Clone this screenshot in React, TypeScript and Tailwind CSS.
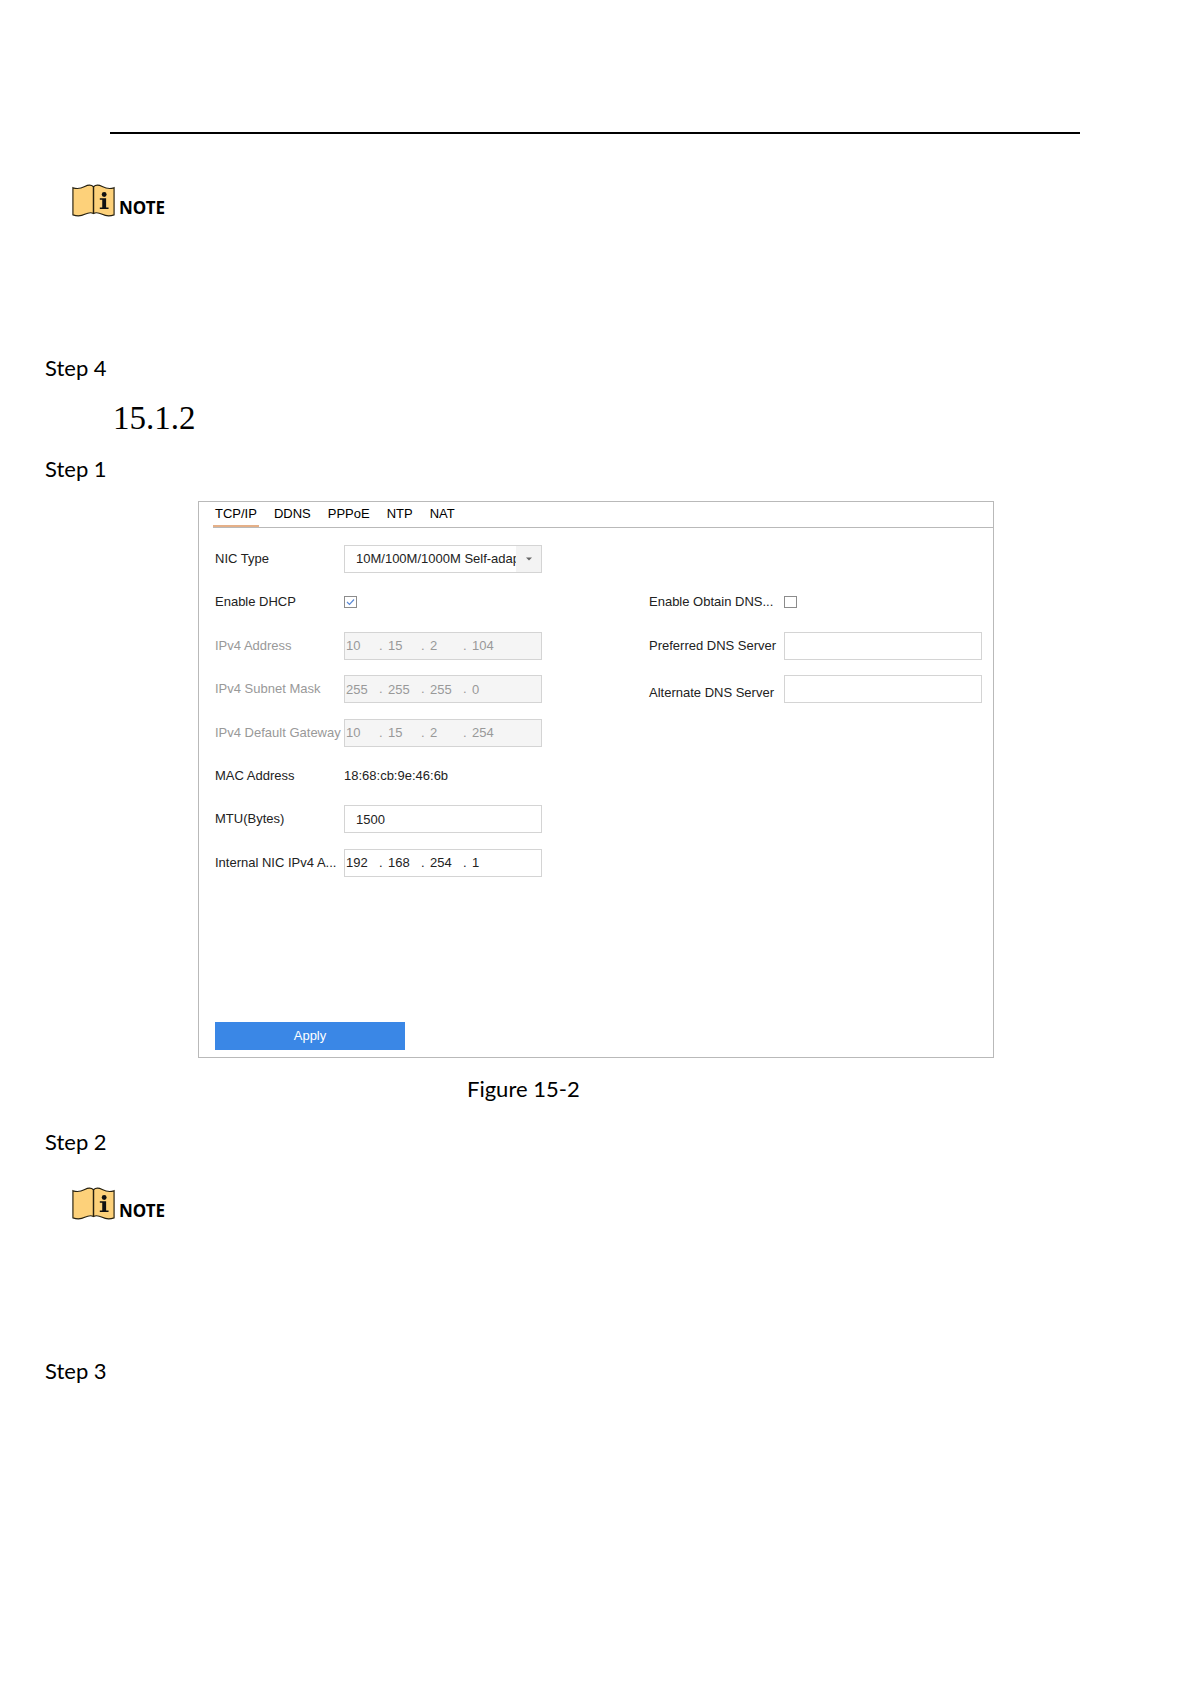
import React, { useId, useState } from "react";

function Note() {
  return (
    <div className="flex items-end gap-1 pl-[72px]">
      <svg width="43" height="33" viewBox="0 0 44 34" aria-hidden="true">
        <path
          d="M.8 3.8C6 5.8 9.500 4.400 13 2.600 16.500.8 19.500 .5 22 2.800 24.500 .5 27.500.8 31 2.600 34.500 4.400 38 5.800 43.200 3.800V31.800C38 33.600 34.500 33 31 31.200 27.500 29.500 24.500 28.800 22 30.500 19.500 28.800 16.500 29.500 13 31.200 9.500 33 6 33.600 .8 31.800Z"
          fill="#fdd17a"
          stroke="#26200f"
          strokeWidth="1.2"
        />
        <path d="M22 2.500V30.500" stroke="#26200f" strokeWidth="1.5" />
        <circle cx="33" cy="10.800" r="2.500" fill="#111" />
        <path d="M28.500 14.800H35V24.200H37.500V25.700H28.500V24.200H31V16.300H28.500Z" fill="#111" />
      </svg>
      <span className="font-['Noto_Sans'] text-[17px] leading-[18px] font-bold">NOTE</span>
    </div>
  );
}

function Step({ n }: { n: number }) {
  return <p className="pl-[45px] font-['Lato'] text-[22px] leading-7">Step {n}</p>;
}

const box = "h-7 w-full border border-[#d4d4d4]";

function Row({
  label,
  muted,
  low,
  wide,
  children,
}: {
  label: string;
  muted?: boolean;
  low?: boolean;
  wide?: boolean;
  children: (id: string) => React.ReactNode;
}) {
  const id = useId();
  return (
    <div className="flex h-7 items-center">
      <label
        htmlFor={id}
        className={
          (wide ? "w-[135px] " : "w-[129px] ") +
          (low ? "self-end " : "") +
          (muted ? "text-[#999]" : "text-[#222]") +
          " shrink-0 leading-5 whitespace-nowrap"
        }
      >
        {label}
      </label>
      <div className="flex w-[198px] items-center">{children(id)}</div>
    </div>
  );
}

function IpField({ id, label, value, disabled }: { id: string; label: string; value: string; disabled?: boolean }) {
  return (
    <div className={box + " flex items-center pl-px " + (disabled ? "bg-[#f5f5f5] text-[#999]" : "text-[#222]")}>
      {value.split(".").map((octet, i) => (
        <React.Fragment key={i}>
          {i > 0 && <span className="w-[9px]">.</span>}
          <input
            id={i === 0 ? id : undefined}
            aria-label={`${label}, part ${i + 1}`}
            className="h-5 w-[33px] bg-transparent"
            defaultValue={octet}
            disabled={disabled}
          />
        </React.Fragment>
      ))}
    </div>
  );
}

function Check({ id, initial }: { id: string; initial: boolean }) {
  const [on, setOn] = useState(initial);
  return (
    <span className="relative flex h-3 w-[13px]">
      <input
        id={id}
        type="checkbox"
        checked={on}
        onChange={() => setOn(!on)}
        className="h-3 w-[13px] appearance-none border border-[#8c8c8c]"
      />
      {on && (
        <svg className="pointer-events-none absolute inset-0" width="13" height="12" viewBox="0 0 13 12" aria-hidden="true">
          <path d="M3 6L5.500 8.500L10 3.500" fill="none" stroke="#5b8ad6" strokeWidth="1.200" />
        </svg>
      )}
    </span>
  );
}

const tabs = ["TCP/IP", "DDNS", "PPPoE", "NTP", "NAT"];

export default function App() {
  return (
    <main className="min-h-screen bg-white pt-[132px] pb-10 text-black">
      <hr className="mr-[111px] ml-[110px] border-0 border-t-2 border-black" />
      <div className="mt-[50px]">
        <Note />
      </div>
      <div className="mt-[137px]">
        <Step n={4} />
      </div>
      <h2 className="mt-4 pl-[113px] font-['Liberation_Serif'] text-[33px] leading-10">15.1.2</h2>
      <div className="mt-[17px]">
        <Step n={1} />
      </div>

      <form
        className="mt-[18px] mr-[197px] ml-[198px] border border-[#b9b9b9] pb-[7px] font-['Liberation_Sans'] text-[13px]"
        onSubmit={(e) => e.preventDefault()}
      >
        <nav className="ml-[14px] flex h-[26px] gap-[13px] border-b border-[#b9b9b9] leading-6 text-black">
          {tabs.map((t, i) => (
            <button
              key={t}
              type="button"
              className={(i === 0 ? "border-[#e5b088]" : "border-transparent") + " border-b-2 px-0.5"}
            >
              {t}
            </button>
          ))}
        </nav>

        <div className="flex justify-between pt-[17px] pr-[11px] pl-4">
          <div className="grid h-[347px] grid-rows-8">
            <Row label="NIC Type">
              {(id) => (
                <div className="relative w-full">
                  <select
                    id={id}
                    className={box + " appearance-none overflow-hidden bg-white pl-[11px] text-clip text-[#222]"}
                  >
                    <option>10M/100M/1000M Self-adaptive</option>
                  </select>
                  <span className="pointer-events-none absolute inset-y-px right-px flex w-[25px] items-center justify-center bg-[#f3f3f3]">
                    <svg width="6" height="4" viewBox="0 0 6 4" aria-hidden="true">
                      <path d="M0 .5H6L3 3.500Z" fill="#666" />
                    </svg>
                  </span>
                </div>
              )}
            </Row>
            <Row label="Enable DHCP">{(id) => <Check id={id} initial />}</Row>
            <Row label="IPv4 Address" muted>
              {(id) => <IpField id={id} label="IPv4 Address" value="10.15.2.104" disabled />}
            </Row>
            <Row label="IPv4 Subnet Mask" muted>
              {(id) => <IpField id={id} label="IPv4 Subnet Mask" value="255.255.255.0" disabled />}
            </Row>
            <Row label="IPv4 Default Gateway" muted>
              {(id) => <IpField id={id} label="IPv4 Default Gateway" value="10.15.2.254" disabled />}
            </Row>
            <Row label="MAC Address">
              {(id) => (
                <output id={id} className="text-[#222]">
                  18:68:cb:9e:46:6b
                </output>
              )}
            </Row>
            <Row label="MTU(Bytes)">
              {(id) => <input id={id} className={box + " pl-[11px] text-[#222]"} defaultValue="1500" />}
            </Row>
            <Row label="Internal NIC IPv4 A...">
              {(id) => <IpField id={id} label="Internal NIC IPv4 Address" value="192.168.254.1" />}
            </Row>
          </div>

          <div className="grid h-[347px] grid-rows-8">
            <div />
            <Row label="Enable Obtain DNS..." wide>
              {(id) => <Check id={id} initial={false} />}
            </Row>
            <Row label="Preferred DNS Server" wide>
              {(id) => <input id={id} className={box} />}
            </Row>
            <Row label="Alternate DNS Server" wide low>
              {(id) => <input id={id} className={box} />}
            </Row>
          </div>
        </div>

        <button type="submit" className="mt-[130px] ml-4 block h-7 w-[190px] bg-[#3a87e6] text-center text-white">
          Apply
        </button>
      </form>

      <p className="mt-[17px] pl-[467px] font-['Lato'] text-[22px] leading-7">Figure 15-2</p>
      <div className="mt-[25px]">
        <Step n={2} />
      </div>
      <div className="mt-[31px]">
        <Note />
      </div>
      <div className="mt-[137px]">
        <Step n={3} />
      </div>
    </main>
  );
}
